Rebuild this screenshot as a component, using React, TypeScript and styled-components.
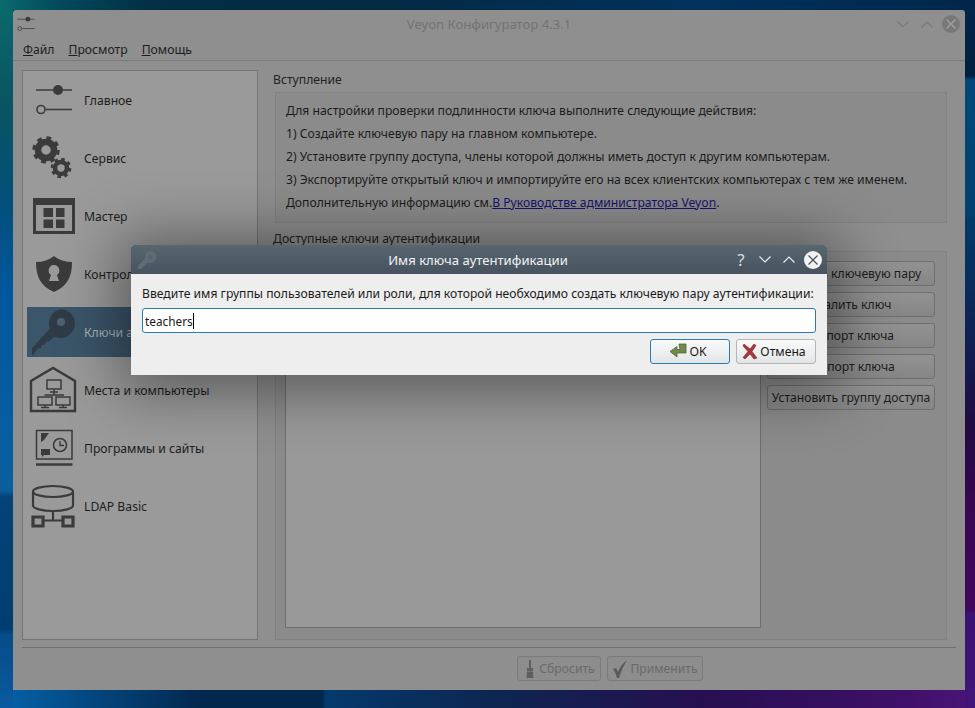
import styled, { createGlobalStyle } from "styled-components";

const GlobalStyle = createGlobalStyle`
  html, body {
    margin: 0;
    padding: 0;
    overflow: hidden;
  }
  body {
    font-family: "Noto Sans", "Open Sans", sans-serif;
    font-size: 12px;
  }
`;

const ICON = "#3b3b3b";

// only the strips round the window are visible, so each edge gets its own gradient
const Desktop = styled.div`
  position: relative;
  width: 975px;
  height: 708px;
  box-sizing: border-box;
  padding: 10px 10px 18px 13px;
  overflow: hidden;
  background-color: #02284e;
  background-repeat: no-repeat;
  background-image:
    linear-gradient(90deg, #0a6a6c 0, #024a5c 60px, #022e46 150px, #032a45 400px, #00325c 700px, #00264a 975px),
    linear-gradient(180deg, #0a6a6c 0, #0a5560 100px, #034f7a 200px, #0058a0 300px, #0b5f9f 490px, #024478 497px, #003e70 630px, #064c88 634px, #0a5aa0 708px),
    linear-gradient(180deg, #00264a 0, #002040 76px, #00487a 80px, #00406e 215px, #003b68 220px, #0f2050 340px, #220a40 430px, #37064f 500px, #42065e 610px, #3a1270 613px, #421478 708px),
    linear-gradient(90deg, #0562a8 0, #04508e 60px, #02284e 200px, #02284e 322px, #043a6c 326px, #0e2550 500px, #260f50 700px, #3e1068 900px, #4a1478 975px);
  background-size: 100% 10px, 13px 100%, 10px 100%, 100% 18px;
  background-position: 0 0, 0 0, 100% 0, 0 100%;
`;

const AppWindow = styled.div`
  width: 952px;
  height: 680px;
  display: flex;
  flex-direction: column;
  background: #8f8f8f;
  border-radius: 3px 3px 0 0;
  color: #1d1d1d;
`;

const TitleBar = styled.div`
  height: 28px;
  flex: none;
  display: flex;
  align-items: center;
  padding: 0 5px 0 1px;
`;

const TitleText = styled.div<{ $color: string; $shift: number }>`
  flex: 1;
  text-align: center;
  font-size: 13.1px;
  padding-left: ${(p) => p.$shift}px;
  color: ${(p) => p.$color};
`;

const ChevronBtn = styled.svg`
  width: 14px;
  height: 9px;
  margin: 0 5px;
  flex: none;
`;

const CloseCircle = styled.div<{ $bg: string }>`
  width: 18px;
  height: 18px;
  margin-left: 3px;
  border-radius: 50%;
  background: ${(p) => p.$bg};
  display: flex;
  align-items: center;
  justify-content: center;
  flex: none;
`;

const MenuBar = styled.div`
  height: 23px;
  flex: none;
  box-sizing: border-box;
  display: flex;
  gap: 14px;
  padding: 0 10px;
  align-items: center;
  border-bottom: 1px solid #7c7c7c;
  font-size: 12.2px;
`;

const Body = styled.div`
  flex: 1;
  min-height: 0;
  display: flex;
  padding: 9px 18px 0 9px;
`;

const Sidebar = styled.div`
  width: 236px;
  flex: none;
  box-sizing: border-box;
  border: 1px solid #747474;
  background: #9a9a9a;
  padding: 0 4px;
`;

const NavItem = styled.div<{ $active?: boolean }>`
  height: 50px;
  margin: 4px 0 8px;
  display: flex;
  align-items: center;
  font-size: 12.2px;
  background: ${(p) => (p.$active ? "linear-gradient(90deg, #3b566b, #3a5366)" : "transparent")};
  color: ${(p) => (p.$active ? "#a9b0b5" : "#1d1d1d")};
`;

const NavIcon = styled.svg`
  width: 50px;
  height: 50px;
  flex: none;
  margin-right: 7px;
`;

const Content = styled.div`
  flex: 1;
  min-width: 0;
  margin-left: 17px;
  display: flex;
  flex-direction: column;
`;

const GroupTitle = styled.div<{ $top: number }>`
  margin: ${(p) => p.$top}px 0 0 -2px;
  height: 15px;
  line-height: 15px;
  font-size: 12.2px;
  color: #222;
`;

const IntroBox = styled.div`
  margin-top: 5px;
  height: 131px;
  box-sizing: border-box;
  border: 1px solid #828282;
  background: #8b8b8b;
  padding: 7px 10px;
  font-size: 12.15px;
  line-height: 22.9px;
  color: #1c1c1c;
`;

const TextLink = styled.span`
  color: #14146e;
  text-decoration: underline;
`;

const KeysBox = styled.div`
  margin-top: 5px;
  flex: 1;
  min-height: 0;
  box-sizing: border-box;
  border: 1px solid #828282;
  background: #8b8b8b;
  padding: 9px 11px 11px 9px;
  display: flex;
  gap: 6px;
`;

const KeyList = styled.div`
  width: 476px;
  flex: none;
  box-sizing: border-box;
  border: 1px solid #6e6e6e;
  background: #999;
`;

const SideButtons = styled.div`
  flex: 1;
  display: flex;
  flex-direction: column;
  gap: 6px;
`;

const GrayButton = styled.div`
  height: 25px;
  box-sizing: border-box;
  border: 1px solid #6f6f6f;
  border-radius: 3px;
  background: linear-gradient(#929292, #868686);
  display: flex;
  align-items: center;
  justify-content: center;
  font-size: 12.15px;
  color: #1d1d1d;
  white-space: nowrap;
`;

const Footer = styled.div`
  flex: none;
  height: 43px;
  margin: 7px 9px 0;
  box-sizing: border-box;
  border-top: 1px solid #6e6e6e;
  padding: 8px 0 0 495px;
  display: flex;
  gap: 6px;
`;

const FooterButton = styled.div<{ $width: number }>`
  width: ${(p) => p.$width}px;
  height: 25px;
  box-sizing: border-box;
  border: 1px solid #7b7b7b;
  border-radius: 3px;
  background: #8d8d8d;
  display: flex;
  align-items: center;
  justify-content: center;
  gap: 2px;
  font-size: 12.15px;
  color: #6a6a6a;
`;

const Dialog = styled.div`
  position: absolute;
  left: 131px;
  top: 245px;
  width: 696px;
  height: 130px;
  border-radius: 3px 3px 0 0;
  background: #eeeeee;
  box-shadow: 0 4px 60px 12px rgba(0, 0, 0, 0.42);
  display: flex;
  flex-direction: column;
  color: #1a1a1a;
`;

const DialogTitle = styled.div`
  height: 29px;
  flex: none;
  display: flex;
  align-items: center;
  padding: 0 5px 0 6px;
  border-radius: 3px 3px 0 0;
  background: linear-gradient(#58666f, #465360);
`;

const HelpMark = styled.span`
  color: #d8dde0;
  font-size: 17px;
  margin-right: 5px;
  width: 14px;
  text-align: center;
`;

const DialogBody = styled.div`
  flex: 1;
  padding: 11px 11px 0;
  display: flex;
  flex-direction: column;
`;

const DialogLabel = styled.div`
  height: 17px;
  line-height: 17px;
  font-size: 12.15px;
  white-space: nowrap;
`;

const NameInput = styled.div`
  margin-top: 6px;
  height: 25px;
  box-sizing: border-box;
  border: 1px solid #2a7cb0;
  border-radius: 3px;
  background: #fff;
  padding-left: 2px;
  display: flex;
  align-items: center;
  font-size: 11.8px;
`;

const Caret = styled.span`
  display: inline-block;
  width: 1px;
  height: 16px;
  background: #000;
`;

const DialogActions = styled.div`
  margin-top: 6px;
  display: flex;
  justify-content: flex-end;
  gap: 6px;
`;

const DialogButton = styled.div<{ $primary?: boolean }>`
  width: 80px;
  height: 25px;
  box-sizing: border-box;
  border: 1px solid ${(p) => (p.$primary ? "#2a7cb0" : "#b5b5b5")};
  border-radius: 3px;
  background: linear-gradient(#fafafa, #e2e5e7);
  display: flex;
  align-items: center;
  justify-content: center;
  gap: 2px;
  padding-right: 4px;
  font-size: 12.2px;
`;

const sliderPaths = (
  <>
    <path d="M7 15H43" strokeWidth="1.6" />
    <circle cx="29" cy="15" r="5" fill={ICON} stroke="none" />
    <path d="M17 34.5H43" strokeWidth="1.6" />
    <circle cx="12" cy="34.5" r="4" strokeWidth="1.6" />
  </>
);

const NavIcons = {
  general: (
    <NavIcon viewBox="-2 0 50 50" fill="none" stroke={ICON}>
      {sliderPaths}
    </NavIcon>
  ),
  service: (
    <NavIcon viewBox="-2 0 50 50" fill="none" stroke={ICON}>
      <circle cx="17" cy="17" r="8" strokeWidth="6.5" />
      <circle cx="17" cy="17" r="11.7" strokeWidth="4" strokeDasharray="4.6 4.6" />
      <circle cx="32" cy="35" r="6" strokeWidth="4.6" />
      <circle cx="32" cy="35" r="8.8" strokeWidth="3" strokeDasharray="3.45 3.45" />
    </NavIcon>
  ),
  master: (
    <NavIcon viewBox="-2 0 50 50">
      <path fill={ICON} fillRule="evenodd" d="M4 7H46V43H4ZM7 14V40H43V14Z" />
      <path fill={ICON} d="M14.5 17H24V26H14.5ZM27 17H35.5V26H27ZM14.5 28.5H24V37H14.5ZM27 28.5H35.5V37H27Z" />
    </NavIcon>
  ),
  control: (
    <NavIcon viewBox="-2 0 50 50">
      <path
        fill={ICON}
        fillRule="evenodd"
        d="M25 7C20 11 14 13 7 13C7 27 11 37 25 43C39 37 43 27 43 13C36 13 30 11 25 7ZM25 16A5.5 5.5 0 0 1 28 26L30 32H20L22 26A5.5 5.5 0 0 1 25 16Z"
      />
    </NavIcon>
  ),
  keys: (
    <NavIcon viewBox="0 0 50 50">
      <path
        fill="#2f3c47"
        d="M34 2A14.5 14.5 0 1 1 27 29.500L22 34.500H19L18 38H15L14 41.500H11L6 48H5V41L23 21.500A14.500 14.500 0 0 1 34 2Z"
      />
      <circle cx="34" cy="15" r="4" fill="#4c6272" />
    </NavIcon>
  ),
  places: (
    <NavIcon viewBox="-1 0 50 50" fill="none" stroke={ICON} strokeWidth="1.5">
      <path d="M3 46V16L25 3L47 16V46Z" strokeWidth="2.4" />
      <path d="M19 15H33V24H19ZM26 24V27M22 27H30M26 27V30M16.500 30H36" />
      <path d="M10 32H24V40H10ZM17 40V42.500M13 42.500H21" />
      <path d="M28 32H42V40H28ZM35 40V42.500M31 42.500H39" />
    </NavIcon>
  ),
  programs: (
    <NavIcon viewBox="-2 0 50 50" fill="none" stroke={ICON}>
      <path d="M7.500 7.500H43V36H7.500Z" strokeWidth="1.500" />
      <path d="M7 41.500H43.500" strokeWidth="2.400" />
      <circle cx="31" cy="22" r="6.500" strokeWidth="1.600" />
      <path d="M31 18V22.500H35" strokeWidth="1.400" />
      <path d="M12 10H20L15 17L12 19Z" fill={ICON} stroke="none" />
      <path d="M12 26H21V32H15L13 34V32H12Z" fill={ICON} stroke="none" />
    </NavIcon>
  ),
  ldap: (
    <NavIcon viewBox="-1 -1.500 50 50" fill="none" stroke={ICON} strokeWidth="2.200">
      <ellipse cx="25" cy="9" rx="20" ry="5.500" />
      <path d="M5 9V23C5 26 14 28.500 25 28.500C36 28.500 45 26 45 23V9" />
      <path d="M25 28.500V38M14 38H36" />
      <path d="M5 34.500H15V43.500H5ZM35 34.500H45V43.500H35Z" strokeWidth="3.200" />
    </NavIcon>
  ),
};

const navItems = [
  { key: "general", label: "Главное" },
  { key: "service", label: "Сервис" },
  { key: "master", label: "Мастер" },
  { key: "control", label: "Контроль доступа" },
  { key: "keys", label: "Ключи аутентификации", active: true },
  { key: "places", label: "Места и компьютеры" },
  { key: "programs", label: "Программы и сайты" },
  { key: "ldap", label: "LDAP Basic" },
] as const;

const Chevron = ({ up, color }: { up?: boolean; color: string }) => (
  <ChevronBtn viewBox="0 0 14 9" fill="none" stroke={color} strokeWidth="1.100">
    <path d={up ? "M1.500 7.500L7 2L12.500 7.500" : "M1.500 1.500L7 7L12.500 1.500"} />
  </ChevronBtn>
);

const CrossMark = ({ color }: { color: string }) => (
  <svg width="12" height="12" viewBox="0 0 12 12" fill="none" stroke={color} strokeWidth="1.200">
    <path d="M1.500 1.500L10.500 10.500M10.500 1.500L1.500 10.500" />
  </svg>
);

export default function App() {
  return (
    <>
      <GlobalStyle />
      <Desktop>
        <AppWindow>
          <TitleBar>
            <svg width="24" height="24" viewBox="0 0 50 50" fill="none" stroke={ICON}>
              {sliderPaths}
            </svg>
            <TitleText $color="#737373" $shift={49}>Veyon Конфигуратор 4.3.1</TitleText>
            <Chevron color="#787878" />
            <Chevron up color="#787878" />
            <CloseCircle $bg="#787878">
              <CrossMark color="#a4a4a4" />
            </CloseCircle>
          </TitleBar>
          <MenuBar>
            <span><u>Ф</u>айл</span>
            <span><u>П</u>росмотр</span>
            <span><u>П</u>омощь</span>
          </MenuBar>
          <Body>
            <Sidebar>
              {navItems.map((item) => (
                <NavItem key={item.key} $active={"active" in item}>
                  {NavIcons[item.key]}
                  {item.label}
                </NavItem>
              ))}
            </Sidebar>
            <Content>
              <GroupTitle $top={2}>Вступление</GroupTitle>
              <IntroBox>
                Для настройки проверки подлинности ключа выполните следующие действия:
                <br />
                1) Создайте ключевую пару на главном компьютере.
                <br />
                2) Установите группу доступа, члены которой должны иметь доступ к другим компьютерам.
                <br />
                3) Экспортируйте открытый ключ и импортируйте его на всех клиентских компьютерах с тем же именем.
                <br />
                Дополнительную информацию см.<TextLink>В Руководстве администратора Veyon</TextLink>.
              </IntroBox>
              <GroupTitle $top={8}>Доступные ключи аутентификации</GroupTitle>
              <KeysBox>
                <KeyList />
                <SideButtons>
                  <GrayButton>Создать ключевую пару</GrayButton>
                  <GrayButton>Удалить ключ</GrayButton>
                  <GrayButton>Импорт ключа</GrayButton>
                  <GrayButton>Экспорт ключа</GrayButton>
                  <GrayButton>Установить группу доступа</GrayButton>
                </SideButtons>
              </KeysBox>
            </Content>
          </Body>
          <Footer>
            <FooterButton $width={84}>
              <svg width="14" height="20" viewBox="0 0 14 20" fill="#5f5f5f">
                <path d="M6 1H8V9H10V12H4V9H6ZM4 12.500H10L10.500 19H3.500Z" />
              </svg>
              Сбросить
            </FooterButton>
            <FooterButton $width={96}>
              <svg width="16" height="20" viewBox="0 0 16 20" fill="#5a5a5a">
                <path d="M1 10L4 9L6 13C8 8 11 4 15 1C12 6 9 12 7 19H5C4 15 2.500 12 1 10Z" />
              </svg>
              Применить
            </FooterButton>
          </Footer>
        </AppWindow>

        <Dialog>
          <DialogTitle>
            <svg width="20" height="20" viewBox="0 0 20 20" fill="#606b74">
              <path d="M13 1A6 6 0 1 1 11 12.500L4 19H1V16L8 8.500A6 6 0 0 1 13 1Z" />
              <circle cx="13.500" cy="7" r="2" fill="#55626c" />
            </svg>
            <TitleText $color="#f0f2f3" $shift={65}>Имя ключа аутентификации</TitleText>
            <HelpMark>?</HelpMark>
            <Chevron color="#eef0f2" />
            <Chevron up color="#eef0f2" />
            <CloseCircle $bg="#f4f4f4">
              <CrossMark color="#46525c" />
            </CloseCircle>
          </DialogTitle>
          <DialogBody>
            <DialogLabel>
              Введите имя группы пользователей или роли, для которой необходимо создать ключевую пару аутентификации:
            </DialogLabel>
            <NameInput>
              teachers
              <Caret />
            </NameInput>
            <DialogActions>
              <DialogButton $primary>
                <svg width="18" height="17" viewBox="0 0 18 17">
                  <path
                    d="M10 1H17V10H8V14L1 8.500L8 3.500V6.500H11Z"
                    fill="#6f8a4c"
                    stroke="#4f6535"
                    strokeWidth="0.800"
                  />
                </svg>
                OK
              </DialogButton>
              <DialogButton>
                <svg width="16" height="17" viewBox="0 0 16 17">
                  <path
                    d="M2 1L8 6L12 1L14 2.500L10 8.500L15 15L12 16L8 11L3 16L1 14.500L6 8.500L1 3Z"
                    fill="#a8363a"
                    stroke="#7c2a2c"
                    strokeWidth="0.600"
                  />
                </svg>
                Отмена
              </DialogButton>
            </DialogActions>
          </DialogBody>
        </Dialog>
      </Desktop>
    </>
  );
}
